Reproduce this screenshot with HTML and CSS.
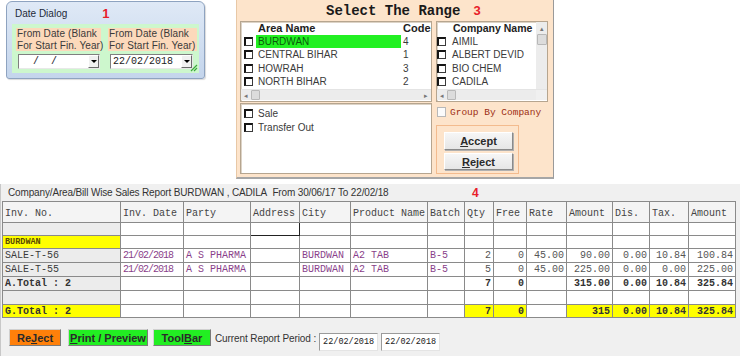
FILE: index.html
```html
<!DOCTYPE html>
<html>
<head>
<meta charset="utf-8">
<link rel="stylesheet" href="styles.css">
</head>
<body>
<div class="top">
  <div class="date-dialog">
    <div class="dd-title"><span>Date Dialog</span><span class="anno dd-num">1</span></div>
    <div class="dd-client">
      <div class="dd-field">
        <div class="dd-label">From Date (Blank<br>For Start Fin. Year)</div>
        <div class="combo c1"><span class="combo-text">  /  /</span><span class="combo-btn"><i class="tri"></i></span></div>
      </div>
      <div class="dd-field">
        <div class="dd-label">From Date (Blank<br>For Start Fin. Year)</div>
        <div class="combo c2"><span class="combo-text">22/02/2018</span><span class="combo-btn"><i class="tri"></i></span></div>
      </div>
      <svg class="grip" width="8" height="8" viewBox="0 0 8 8"><path d="M7 1 L1 7 M7 4 L4 7 M7 7 L7 7" stroke="#3caa3c" stroke-width="1.2"/></svg>
    </div>
  </div>

  <div class="range">
    <div class="range-title"><span>Select The Range</span><span class="anno r-num">3</span></div>
    <div class="range-grid">
      <div class="list area-list">
        <div class="list-body">
          <div class="lhead"><span class="a-name">Area Name</span><span class="a-code">Code</span></div>
          <div class="lrow h14"><i class="cb"></i><span class="a-name sel">BURDWAN</span><span class="a-code">4</span></div>
          <div class="lrow h13"><i class="cb"></i><span class="a-name">CENTRAL BIHAR</span><span class="a-code">1</span></div>
          <div class="lrow h14"><i class="cb"></i><span class="a-name">HOWRAH</span><span class="a-code">3</span></div>
          <div class="lrow h13"><i class="cb"></i><span class="a-name">NORTH BIHAR</span><span class="a-code">2</span></div>
        </div>
        <div class="hscroll">
          <span class="sarrow">&#9666;</span><span class="thumb-h"></span><span class="htrack"></span><span class="sarrow">&#9656;</span>
        </div>
      </div>

      <div class="list comp-list">
        <div class="comp-main">
          <div class="list-body">
            <div class="lhead"><span class="c-name">Company Name</span></div>
            <div class="lrow h14"><i class="cb"></i><span class="c-name">AIMIL</span></div>
            <div class="lrow h13"><i class="cb"></i><span class="c-name">ALBERT DEVID</span></div>
            <div class="lrow h14"><i class="cb"></i><span class="c-name">BIO CHEM</span></div>
            <div class="lrow h13"><i class="cb"></i><span class="c-name">CADILA</span></div>
          </div>
          <div class="vscroll"><span class="sarrow v">&#9652;</span><span class="thumb-v"></span></div>
        </div>
        <div class="hscroll">
          <span class="sarrow">&#9666;</span><span class="thumb-h"></span><span class="htrack"></span><span class="corner"></span>
        </div>
      </div>

      <div class="list sale-list">
        <div class="lrow h14"><i class="cb"></i><span class="s-name">Sale</span></div>
        <div class="lrow h14"><i class="cb"></i><span class="s-name">Transfer Out</span></div>
      </div>

      <div class="range-side">
        <label class="group-by"><i class="flat-cb"></i><span>Group By Company</span></label>
        <div class="btn-frame">
          <button class="gbtn"><u>A</u>ccept</button>
          <button class="gbtn"><u>R</u>eject</button>
        </div>
      </div>
    </div>
  </div>
</div>

<div class="report">
  <div class="rep-title"><span class="rep-text">Company/Area/Bill Wise Sales Report BURDWAN , CADILA&nbsp; From 30/06/17 To 22/02/18</span><span class="anno rep-num">4</span></div>
  <table class="grid">
    <colgroup>
      <col style="width:118px"><col style="width:63px"><col style="width:67px"><col style="width:49px"><col style="width:51px"><col style="width:77px"><col style="width:37px"><col style="width:29px"><col style="width:33px"><col style="width:40px"><col style="width:46px"><col style="width:37px"><col style="width:39px"><col style="width:47px">
    </colgroup>
    <tr class="hdr"><td>Inv. No.</td><td>Inv. Date</td><td>Party</td><td>Address</td><td>City</td><td>Product Name</td><td>Batch</td><td>Qty</td><td>Free</td><td>Rate</td><td>Amount</td><td>Dis.</td><td>Tax.</td><td>Amount</td></tr>
    <tr class="r13"><td class="first"></td><td></td><td></td><td class="focus"></td><td></td><td></td><td></td><td></td><td></td><td></td><td></td><td></td><td></td><td></td></tr>
    <tr class="r13"><td class="first yel area">BURDWAN</td><td></td><td></td><td></td><td></td><td></td><td></td><td></td><td></td><td></td><td></td><td></td><td></td><td></td></tr>
    <tr class="r14"><td class="first">SALE-T-56</td><td class="p date">21/02/2018</td><td class="p">A S PHARMA</td><td></td><td class="p">BURDWAN</td><td class="p">A2 TAB</td><td class="p">B-5</td><td class="n">2</td><td class="n">0</td><td class="n">45.00</td><td class="n">90.00</td><td class="n">0.00</td><td class="n">10.84</td><td class="n">100.84</td></tr>
    <tr class="r14"><td class="first">SALE-T-55</td><td class="p date">21/02/2018</td><td class="p">A S PHARMA</td><td></td><td class="p">BURDWAN</td><td class="p">A2 TAB</td><td class="p">B-5</td><td class="n">5</td><td class="n">0</td><td class="n">45.00</td><td class="n">225.00</td><td class="n">0.00</td><td class="n">0.00</td><td class="n">225.00</td></tr>
    <tr class="r14 tot"><td class="first">A.Total : 2</td><td></td><td></td><td></td><td></td><td></td><td></td><td class="n">7</td><td class="n">0</td><td></td><td class="n">315.00</td><td class="n">0.00</td><td class="n">10.84</td><td class="n">325.84</td></tr>
    <tr class="r14"><td class="first"></td><td></td><td></td><td></td><td></td><td></td><td></td><td></td><td></td><td></td><td></td><td></td><td></td><td></td></tr>
    <tr class="r13 tot"><td class="first yel">G.Total : 2</td><td></td><td></td><td></td><td></td><td></td><td></td><td class="n yel">7</td><td class="n yel">0</td><td></td><td class="n yel">315</td><td class="n yel">0.00</td><td class="n yel">10.84</td><td class="n yel">325.84</td></tr>
  </table>
  <div class="actions">
    <button class="abtn orange">Re<u>J</u>ect</button>
    <button class="abtn green w80"><u>P</u>rint / Preview</button>
    <button class="abtn green w58">Tool<u>B</u>ar</button>
    <span class="period">Current Report Period :</span>
    <span class="datebox">22/02/2018</span>
    <span class="datebox">22/02/2018</span>
  </div>
</div>
</body>
</html>
```

FILE: styles.css
```css
* { box-sizing: border-box; }
html, body { margin: 0; padding: 0; }
body {
  width: 740px;
  height: 356px;
  overflow: hidden;
  background: #ffffff;
  font-family: "Liberation Sans", Arial, sans-serif;
  color: #333;
}
.anno { color: #e8202a; font-weight: bold; font-size: 12px; font-family: "Liberation Sans", Arial, sans-serif; }

/* ---------- top ---------- */
.top { display: flex; align-items: flex-start; height: 184px; }

.date-dialog {
  margin: 1px 0 0 6px;
  width: 199px;
  height: 78px;
  border: 1px solid #8ea3c0;
  border-radius: 6px 6px 3px 3px;
  background: linear-gradient(#dfe9f6, #c4d5ec);
  padding: 0 5px 5px 5px;
  display: flex;
  flex-direction: column;
  box-shadow: 1px 1px 1px rgba(0,0,0,0.15);
}
.dd-title {
  height: 22px;
  display: flex;
  align-items: center;
  padding-left: 3px;
  font-size: 10px;
  color: #1e2a3a;
}
.dd-num { margin-left: 35px; font-size: 13px; }
.dd-client {
  flex: 1;
  background: #cdf7cd;
  display: flex;
  gap: 7px;
  padding: 4px 0 0 4px;
  position: relative;
}
.dd-field { display: flex; flex-direction: column; }
.dd-label {
  width: 85px;
  height: 23px;
  background: #fcd9bb;
  font-size: 10px;
  line-height: 11.5px;
  color: #3a3a3a;
  padding-left: 1px;
  white-space: nowrap;
  letter-spacing: 0.1px;
}
.dd-field + .dd-field .dd-label { width: 89px; }
.combo {
  margin-top: 3px;
  height: 15px;
  background: #fff;
  border: 1px solid;
  border-color: #7f7f7f #e8e8e8 #e8e8e8 #7f7f7f;
  display: flex;
  align-items: center;
  font-family: "Liberation Mono", "Courier New", monospace;
  font-size: 10px;
  color: #222;
  white-space: pre;
}
.c1 { width: 82px; margin-left: 2px; }
.c2 { width: 83px; margin-left: 2px; }
.combo-text { flex: 1; padding-left: 2px; }
.combo-btn {
  width: 11px;
  height: 13px;
  background: #f0f0f0;
  border: 1px solid;
  border-color: #fff #6a6a6a #6a6a6a #fff;
  display: flex;
  align-items: center;
  justify-content: center;
}
.tri {
  width: 0; height: 0;
  border-left: 3px solid transparent;
  border-right: 3px solid transparent;
  border-top: 3px solid #000;
}
.grip { position: absolute; right: 1px; bottom: 1px; }

/* ---------- range ---------- */
.range {
  margin-left: 31px;
  width: 318px;
  height: 179px;
  background: #fde4cb;
  border-left: 1px solid #e8c8a6;
  border-right: 1px solid #9a9a9a;
  border-bottom: 2px solid #a6a6a6;
}
.range-title {
  height: 21px;
  display: flex;
  align-items: center;
  padding-left: 89px;
  font-family: "Liberation Mono", "Courier New", monospace;
  font-weight: bold;
  font-size: 14px;
  color: #1a1a1a;
}
.r-num { margin-left: 13px; font-size: 13px; }
.range-grid {
  display: grid;
  grid-template-columns: 192px 112px;
  grid-template-rows: 81px 71px;
  column-gap: 4px;
  row-gap: 1px;
  padding-left: 3px;
}
.list {
  background: #fff;
  border: 1px solid #b6a58f;
  box-shadow: inset 1px 1px 0 #ddd3c6;
  font-size: 10px;
  color: #3a3a3a;
  overflow: hidden;
}
.area-list, .comp-list { display: flex; flex-direction: column; }
.list-body { flex: 1; }
.lhead {
  height: 12px;
  display: flex;
  align-items: center;
  font-weight: bold;
  font-size: 11px;
  color: #222;
  white-space: nowrap;
}
.lrow { display: flex; align-items: center; padding-left: 3px; white-space: nowrap; }
.h14 { height: 14px; }
.h13 { height: 13px; }
.cb {
  display: block;
  width: 9px;
  height: 9px;
  flex: none;
  background: #fff;
  border-style: solid;
  border-width: 2px 1px 1px 2px;
  border-color: #151515 #3a3a3a #3a3a3a #151515;
}
.a-name { display: flex; align-items: center; width: 145px; height: 13px; margin-left: 3px; padding-left: 2px; }
.lhead .a-name { margin-left: 15px; }
.a-code { margin-left: 2px; }
.sel { background: #22f022; color: #0b5a0b; }

.hscroll {
  height: 11px;
  margin-bottom: 1px;
  display: flex;
  align-items: stretch;
  background: #ececec;
  border-top: 1px solid #e4e4e4;
}
.sarrow {
  width: 10px;
  font-size: 7px;
  color: #777;
  display: flex;
  align-items: center;
  justify-content: center;
  line-height: 1;
}
.thumb-h {
  width: 9px;
  background: #dcdcdc;
  border: 1px solid #b8b8b8;
  border-radius: 1px;
}
.htrack { flex: 1; }
.corner { width: 11px; background: #f0f0f0; }

.comp-main { flex: 1; display: flex; }
.comp-list .list-body { flex: 1; min-width: 0; }
.comp-list .lrow { padding-left: 0; }
.c-name { margin-left: 6px; }
.lhead .c-name { margin-left: 16px; font-size: 10.5px; }
.vscroll {
  width: 11px;
  flex: none;
  background: #ececec;
  display: flex;
  flex-direction: column;
  align-items: center;
}
.sarrow.v { height: 12px; width: 11px; }
.thumb-v {
  width: 10px;
  height: 11px;
  background: #dcdcdc;
  border: 1px solid #b8b8b8;
  border-radius: 1px;
}

.sale-list { padding-top: 2px; }
.s-name { margin-left: 5px; }

.range-side { display: flex; flex-direction: column; }
.group-by {
  margin-top: 4px;
  height: 10px;
  display: flex;
  align-items: center;
  font-family: "Liberation Mono", "Courier New", monospace;
  font-size: 9.5px;
  color: #9c2d12;
  white-space: nowrap;
}
.flat-cb {
  display: block;
  width: 9px; height: 10px;
  background: #fbfbfb;
  border: 1px solid #b8b8b8;
  margin: 0 4px 0 1px;
}
.btn-frame {
  margin-top: 8px;
  width: 83px;
  height: 50px;
  border: 1px solid #f3bb8e;
  padding: 6px 0 0 7px;
  display: flex;
  flex-direction: column;
  gap: 2px;
}
.gbtn {
  width: 69px;
  height: 18px;
  margin: 0;
  padding: 0;
  background: linear-gradient(#f6f6f6, #e6e6e6);
  border: 1px solid;
  border-color: #fff #8a8a8a #8a8a8a #fff;
  box-shadow: 1px 1px 0 #b0b0b0;
  font-family: "Liberation Sans", Arial, sans-serif;
  font-weight: bold;
  font-size: 11px;
  color: #2a2a2a;
}
.gbtn + .gbtn { height: 17px; margin-top: 1px; }

/* ---------- report ---------- */
.report {
  height: 172px;
  background: #f0f0f0;
  border-left: 1px solid #c8c8c8;
}
.rep-title {
  height: 17px;
  display: flex;
  align-items: center;
  font-size: 10px;
  color: #333;
}
.rep-text { width: 471px; padding-left: 7px; letter-spacing: -0.15px; white-space: nowrap; }
.rep-num { font-size: 12px; }

.grid {
  margin-left: 1px;
  border-collapse: collapse;
  table-layout: fixed;
  width: 733px;
  font-family: "Liberation Mono", "Courier New", monospace;
  font-size: 10px;
  color: #3a3a3a;
}
.grid td {
  border: 1px solid #8a8a8a;
  padding: 0 2px;
  background: #fff;
  white-space: nowrap;
  overflow: hidden;
  line-height: 11px;
}
.grid .hdr td { height: 21px; background: #f4f4f4; padding-top: 2px; color: #444; }
.r13 td { height: 13px; }
.r14 td { height: 14px; }
.grid td.first { background: #ececec; }
.grid td.yel { background: #ffff00; }
.grid td.focus { border: 1px solid #222; }
.grid td.area { font-size: 8.5px; font-weight: bold; color: #5a4a00; }
.p { color: #8a3f8a; }
.date { letter-spacing: -1px; padding-left: 3px; }
.n { text-align: right; color: #555; }
.tot td { font-weight: bold; color: #333; }
.tot td.n { color: #333; }

.actions {
  display: flex;
  align-items: flex-start;
  margin-top: 11px;
  padding-left: 8px;
}
.abtn {
  height: 17px;
  margin: 0;
  padding: 0;
  border: 1px solid;
  border-color: #d0d0d0 #7a7a7a #7a7a7a #d0d0d0;
  font-family: "Liberation Sans", Arial, sans-serif;
  font-weight: bold;
  font-size: 11px;
  color: #2a2a2a;
}
.orange { width: 52px; background: #ff800a; }
.green { background: #22ee22; }
.w80 { width: 80px; margin-left: 7px; }
.w58 { width: 58px; margin-left: 5px; }
.period { margin-left: 4px; margin-top: 4px; font-size: 10px; color: #333; letter-spacing: -0.1px; }
.datebox {
  margin-top: 4px;
  width: 59px;
  height: 18px;
  background: #fff;
  border: 1px solid;
  border-color: #9a9a9a #e4e4e4 #e4e4e4 #9a9a9a;
  font-family: "Liberation Mono", "Courier New", monospace;
  font-size: 8.5px;
  padding: 3px 0 0 3px;
  color: #222;
  margin-left: 3px;
  white-space: nowrap;
}
```
